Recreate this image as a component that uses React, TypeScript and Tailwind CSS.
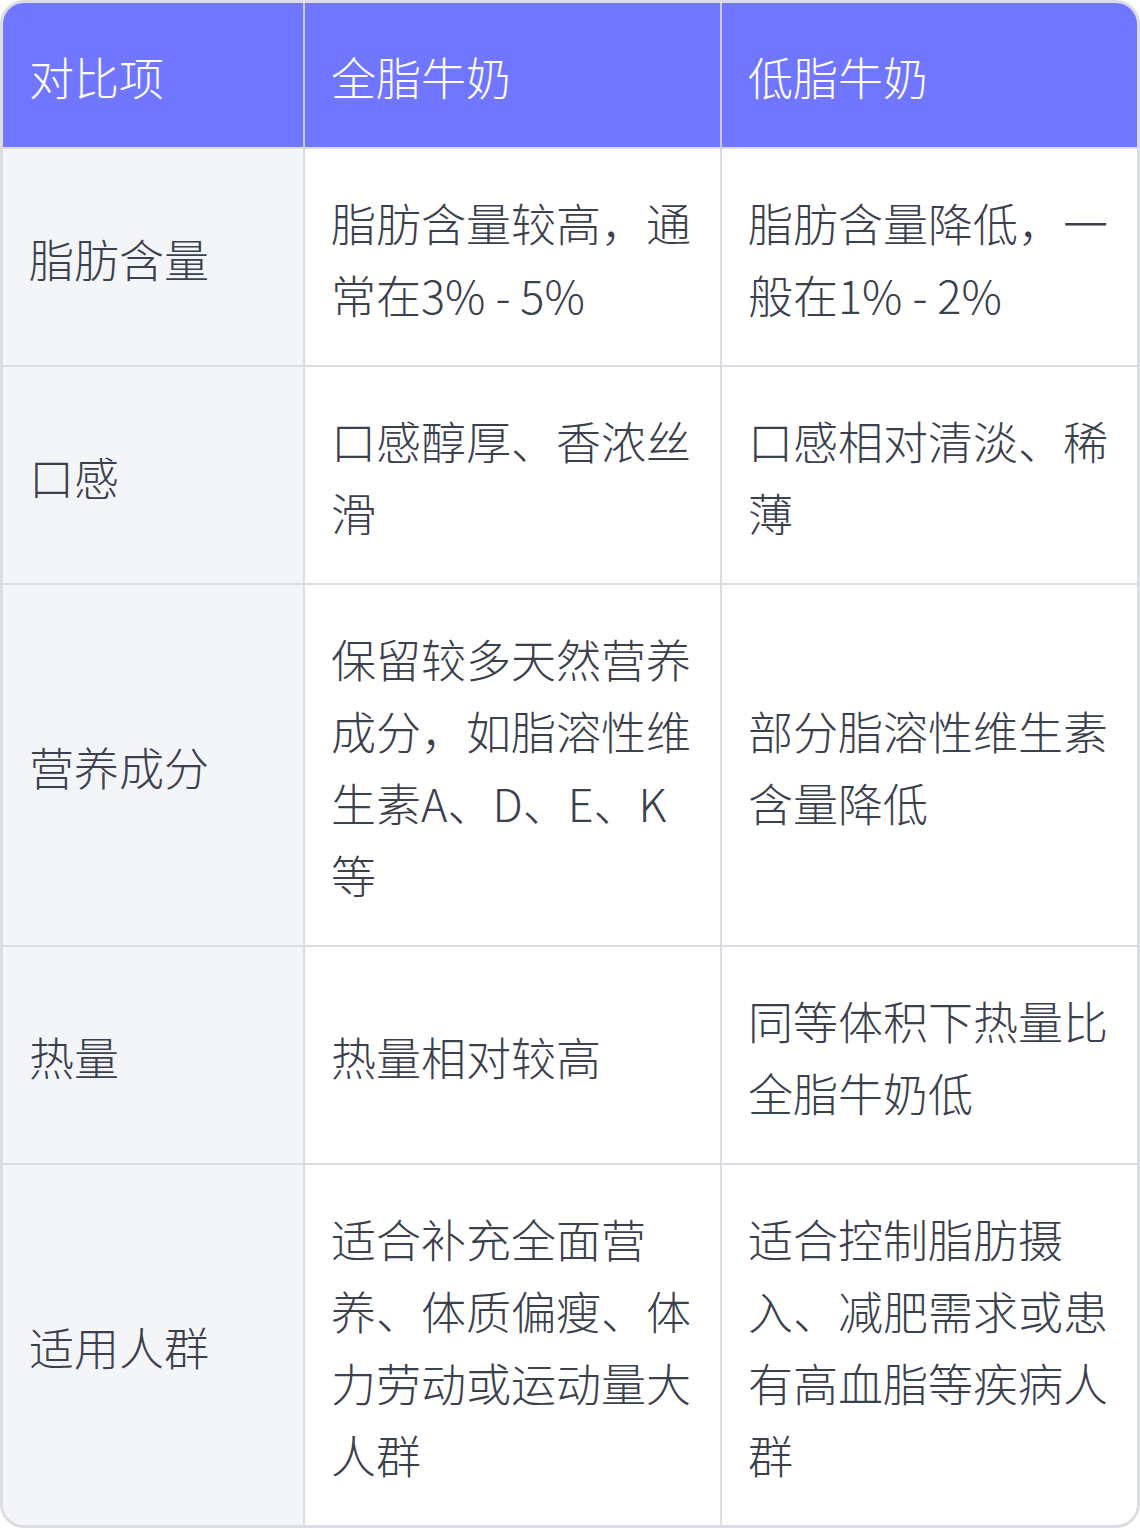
const rows: [string, string, string][] = [
  ["脂肪含量", "脂肪含量较高，通常在3% - 5%", "脂肪含量降低，一般在1% - 2%"],
  ["口感", "口感醇厚、香浓丝滑", "口感相对清淡、稀薄"],
  ["营养成分", "保留较多天然营养成分，如脂溶性维生素A、D、E、K等", "部分脂溶性维生素含量降低"],
  ["热量", "热量相对较高", "同等体积下热量比全脂牛奶低"],
  ["适用人群", "适合补充全面营养、体质偏瘦、体力劳动或运动量大人群", "适合控制脂肪摄入、减肥需求或患有高血脂等疾病人群"],
];

export default function App() {
  return (
    <div className="w-[1140px] bg-white font-['Noto_Sans_CJK_SC','Noto_Sans',sans-serif] font-light">
      <div className="overflow-hidden rounded-[24px] border-[3px] border-[#dcdde3]">
        <table className="w-full table-fixed border-collapse text-[45px] leading-[72px]">
          <colgroup>
            <col className="w-[301px]" />
            <col className="w-[417px]" />
            <col />
          </colgroup>
          <thead>
            <tr className="bg-[#7076ff] text-white">
              {["对比项", "全脂牛奶", "低脂牛奶"].map((h, i) => (
                <th
                  key={h}
                  className={`px-[26px] pt-[38px] pb-[34px] text-left font-light ${i > 0 ? "border-l-2 border-[#c9cbf3]" : ""}`}
                >
                  {h}
                </th>
              ))}
            </tr>
          </thead>
          <tbody className="text-[#3b404d]">
            {rows.map(([a, b, c]) => (
              <tr key={a} className="border-t-2 border-[#dcdde3]">
                <td className="bg-[#f4f5f9] px-[26px] pt-[38px] pb-[34px] align-middle">{a}</td>
                <td className="border-l-2 border-[#dcdde3] px-[26px] pt-[38px] pb-[34px] align-middle">{b}</td>
                <td className="border-l-2 border-[#dcdde3] px-[26px] pt-[38px] pb-[34px] align-middle">{c}</td>
              </tr>
            ))}
          </tbody>
        </table>
      </div>
    </div>
  );
}
